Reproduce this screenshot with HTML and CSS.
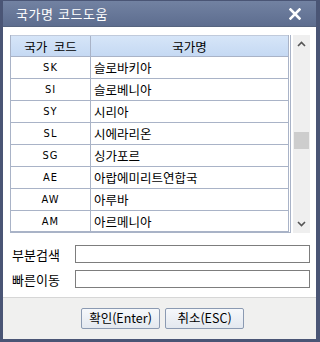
FILE: index.html
```html
<!DOCTYPE html>
<html lang="ko">
<head>
<meta charset="utf-8">
<link rel="stylesheet" href="styles.css">
</head>
<body>
<div class="window">
  <div class="titlebar">
    <span class="title">국가명 코드도움</span>
    <svg class="close" width="12" height="12" viewBox="0 0 12 12"><path d="M1.5 1.5 L10.5 10.5 M10.5 1.5 L1.5 10.5" stroke="#fff" stroke-width="2.6" stroke-linecap="square"/></svg>
  </div>
  <div class="content">
    <div class="list">
      <div class="grid">
        <div class="row head"><div class="c1">국가 코드</div><div class="c2 center">국가명</div></div>
        <div class="row"><div class="c1 code">SK</div><div class="c2">슬로바키아</div></div>
        <div class="row"><div class="c1 code">SI</div><div class="c2">슬로베니아</div></div>
        <div class="row"><div class="c1 code">SY</div><div class="c2">시리아</div></div>
        <div class="row"><div class="c1 code">SL</div><div class="c2">시에라리온</div></div>
        <div class="row"><div class="c1 code">SG</div><div class="c2">싱가포르</div></div>
        <div class="row"><div class="c1 code">AE</div><div class="c2">아랍에미리트연합국</div></div>
        <div class="row"><div class="c1 code">AW</div><div class="c2">아루바</div></div>
        <div class="row last"><div class="c1 code">AM</div><div class="c2">아르메니아</div></div>
      </div>
      <div class="scrollbar">
        <svg class="arrow" width="9" height="6" viewBox="0 0 9 6"><path d="M1 5 L4.5 1.5 L8 5" fill="none" stroke="#555" stroke-width="1.6"/></svg>
        <div class="track"><div class="thumb"></div></div>
        <svg class="arrow" width="9" height="6" viewBox="0 0 9 6"><path d="M1 1 L4.5 4.5 L8 1" fill="none" stroke="#555" stroke-width="1.6"/></svg>
      </div>
    </div>
    <div class="field first"><span class="label">부분검색</span><div class="input"></div></div>
    <div class="field"><span class="label">빠른이동</span><div class="input"></div></div>
  </div>
  <div class="footer">
    <button class="btn">확인(Enter)</button>
    <button class="btn">취소(ESC)</button>
  </div>
</div>
</body>
</html>
```
FILE: styles.css
```css
* { box-sizing: border-box; }
body { margin: 0; background: #fff; font-family: "Noto Sans CJK KR", "Noto Sans", sans-serif; font-size: 12.5px; color: #000; }
.window {
  width: 320px; height: 342px;
  border-style: solid; border-color: #4a5575;
  border-width: 1px 4px 3px 3px;
  display: flex; flex-direction: column;
  background: #fff;
}
.titlebar {
  height: 26px;
  background: linear-gradient(#7282a2, #5d6d8f);
  border-bottom: 1px solid #56647f;
  display: flex; align-items: center; justify-content: space-between;
  padding: 0 15px 0 13px;
}
.title { color: #fff; font-size: 13px; line-height: 1; letter-spacing: 0.6px; }
.close { display: block; }
.content { height: 270px; padding: 8px 6px 0 7px; background: #fff; }
.list { display: flex; gap: 2px; height: 198px; }
.grid {
  width: 281px; height: 198px;
  border-left: 1px solid #a9b3c7;
  border-right: 3px double #a9b3c7;
  border-bottom: 2px solid #a9b3c7;
  display: flex; flex-direction: column;
}
.row { display: flex; height: 22px; border-bottom: 1px solid #a9b3c7; flex: none; }
.row.last { border-bottom: none; height: 21px; }
.row.head { background: linear-gradient(#d6e5f8, #c5d9f3); border-top: 1px solid #c0cadb; }
.head .c1 { word-spacing: 3px; }
.c1 { width: 80px; border-right: 1px solid #a9b3c7; display: flex; align-items: center; justify-content: center; }
.c2 { flex: 1; display: flex; align-items: center; padding-left: 3px; }
.c2.center { justify-content: center; padding-left: 0; }
.code { font-family: "DejaVu Sans Condensed", "Liberation Sans", sans-serif; font-size: 11px; letter-spacing: 1px; }
.scrollbar { width: 17px; height: 198px; background: #efefef; display: flex; flex-direction: column; align-items: center; }
.arrow { display: block; margin: 6px 0; flex: none; }
.track { flex: 1; width: 100%; position: relative; }
.thumb { position: absolute; left: 1px; right: 1px; top: 79px; height: 17px; background: #cdcdcd; }
.field { display: flex; align-items: center; height: 18px; margin-top: 7px; }
.field.first { margin-top: 12px; }
.label { width: 65px; padding-left: 2px; font-size: 13px; color: #000; }
.input { width: 235px; height: 18px; border: 1px solid #7d7d7d; background: #fff; }
.footer {
  flex: 1; background: #f0f0ef; border-top: 1px solid #d6d6d6;
  display: flex; justify-content: center; align-items: flex-start; gap: 5px;
  padding-top: 10px; padding-left: 6px;
}
.btn {
  height: 21px; width: 79px; margin: 0; padding: 0;
  font-family: "Noto Sans CJK KR", sans-serif; font-size: 12.5px; color: #000;
  background: linear-gradient(#f6f8fb, #e3e8ef);
  border: 1px solid #8b9ab2; border-radius: 2px;
  line-height: 1;
}
```
